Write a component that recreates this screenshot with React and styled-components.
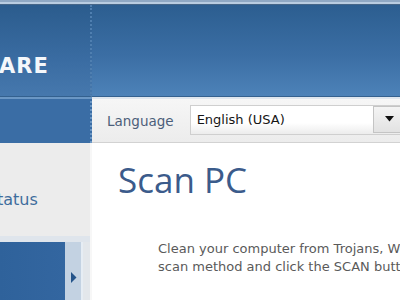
import styled, { createGlobalStyle } from 'styled-components';

const Global = createGlobalStyle`
	html, body {
		margin: 0;
		padding: 0;
		width: 400px;
		height: 300px;
		overflow: hidden;
		background: #ffffff;
	}
`

function App() {
  return (
    <Window>
		<Global />
		<TopStrip />
		<Row $height={92}>
			<BrandCell>
				<Brand>ARE</Brand>
			</BrandCell>
			<HeaderFill />
		</Row>
		<Row $height={46}>
			<NavBand />
			<Toolbar>
				<Label>Language</Label>
				<Select>
					<SelectValue>English (USA)</SelectValue>
					<SelectButton>
						<svg width="9" height="6" viewBox="0 0 9 6">
							<path d="M0 0h9L4.5 5.5z" fill="#111" />
						</svg>
					</SelectButton>
				</Select>
			</Toolbar>
		</Row>
		<Body>
			<Sidebar>
				<NavItem>tatus</NavItem>
				<ActiveItem>
					<ActiveFill />
					<ArrowCol>
						<svg width="6" height="11" viewBox="0 0 6 11">
							<path d="M0 0L5.5 5.5L0 11z" fill="#24548a" />
						</svg>
					</ArrowCol>
					<ActiveEdge />
				</ActiveItem>
			</Sidebar>
			<Main>
				<Title>Scan PC</Title>
				<Text>
					Clean your computer from Trojans, Worms and other threats. Select a
					<br />
					scan method and click the SCAN button to start.
				</Text>
			</Main>
		</Body>
    </Window>
  );
}

const Window = styled.div`
	width: 400px;
	height: 300px;
	display: flex;
	flex-direction: column;
	overflow: hidden;
`

const TopStrip = styled.div`
	height: 4px;
	flex-shrink: 0;
	background: linear-gradient(#90a9c4 0, #90a9c4 2px, #b9cde1 2px, #b9cde1 4px);
	border-bottom: 1px solid #466688;
`

const Row = styled.div`
	display: grid;
	grid-template-columns: 92px 1fr;
	height: ${p => p.$height}px;
	flex-shrink: 0;
`

const BrandCell = styled.div`
	background: linear-gradient(#2b5c8d, #3a6ca2 60%, #4678ad);
	border-right: 2px dotted #4f7fb0;
	border-bottom: 1px solid #34618f;
	overflow: hidden;
	display: flex;
	align-items: center;
	padding-top: 30px;
`

const Brand = styled.div`
	font-family: "DejaVu Sans", sans-serif;
	font-weight: bold;
	font-size: 21px;
	letter-spacing: 1px;
	color: #f4f7fb;
	margin-left: -1px;
`

const HeaderFill = styled.div`
	background: linear-gradient(#2c5e90, #3b6ea4 55%, #4d82b8);
	border-bottom: 1px solid #34618f;
`

const NavBand = styled.div`
	background: #3a6da5;
	border-top: 2px solid #6b97c4;
	border-right: 2px dotted #6a96c4;
`

const Toolbar = styled.div`
	background: linear-gradient(#f6f6f6, #ececec);
	border-top: 2px solid #dfe6ee;
	border-bottom: 1px solid #d2d2d2;
	display: flex;
	align-items: center;
	padding-left: 15px;
	gap: 16px;
`

const Label = styled.span`
	font-family: "DejaVu Sans", sans-serif;
	font-size: 13.5px;
	color: #4c5e7a;
`

const Select = styled.div`
	flex: 1;
	height: 28px;
	margin-top: -1px;
	display: flex;
	align-items: center;
	background: linear-gradient(#ffffff 60%, #ececec);
	border: 1px solid #cfcfcf;
	border-right: none;
`

const SelectValue = styled.span`
	flex: 1;
	font-family: "DejaVu Sans", sans-serif;
	font-size: 13px;
	color: #151515;
	padding-left: 6px;
	margin-top: -1px;
`

const SelectButton = styled.div`
	width: 22px;
	height: 25px;
	margin-top: -2px;
	display: flex;
	align-items: center;
	justify-content: center;
	padding-left: 4px;
	background: linear-gradient(#f4f4f4, #e2e2e2);
	border: 1px solid #c4c4c4;
	border-right: none;
`

const Body = styled.div`
	flex: 1;
	display: grid;
	grid-template-columns: 92px 1fr;
`

const Sidebar = styled.div`
	background: #ececec;
	border-right: 2px solid #f7f7f7;
	display: flex;
	flex-direction: column;
`

const NavItem = styled.div`
	height: 93px;
	display: flex;
	align-items: center;
	padding-top: 20px;
	box-sizing: border-box;
	font-family: "DejaVu Sans", sans-serif;
	font-size: 16px;
	color: #3e6c9d;
	margin-left: -3px;
`

const ActiveItem = styled.div`
	flex: 1;
	display: flex;
	border-top: 6px solid #dfe5ec;
`

const ActiveFill = styled.div`
	width: 65px;
	background: linear-gradient(90deg, #2f629b, #3366a0);
`

const ArrowCol = styled.div`
	width: 18px;
	background: #c3d2e2;
	display: flex;
	align-items: flex-start;
	justify-content: center;
	padding: 30px 0 0 2px;
	box-sizing: border-box;
	border-right: 2px solid #e6edf4;
`

const ActiveEdge = styled.div`
	flex: 1;
	background: #e3e7eb;
`

const Main = styled.div`
	background: #ffffff;
	padding: 19px 0 0 26px;
	overflow: hidden;
`

const Title = styled.h1`
	margin: 0;
	font-family: "Open Sans", sans-serif;
	font-weight: normal;
	font-size: 35px;
	line-height: 1;
	color: #3b5b8b;
	white-space: nowrap;
`

const Text = styled.p`
	margin: 43px 0 0 40px;
	font-family: "DejaVu Sans", sans-serif;
	font-size: 13px;
	line-height: 18px;
	color: #5a5a5a;
	white-space: nowrap;
`

export default App;
